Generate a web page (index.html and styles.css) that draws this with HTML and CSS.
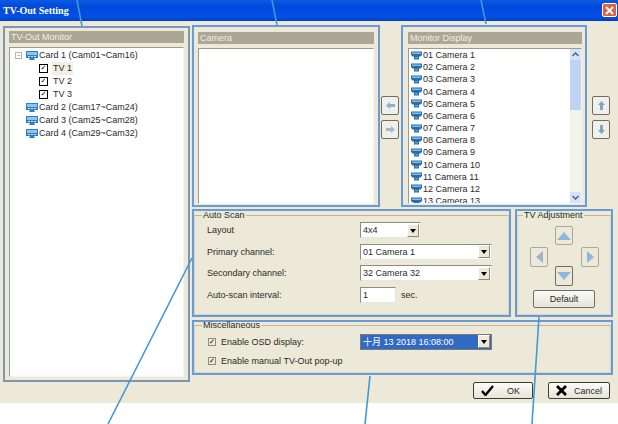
FILE: index.html
```html
<!DOCTYPE html>
<html lang="en">
<head>
<meta charset="utf-8">
<title>TV-Out Setting</title>
<link rel="stylesheet" href="styles.css">
</head>
<body>
<svg class="defs" width="0" height="0" aria-hidden="true">
  <symbol id="card" viewBox="0 0 14 11">
    <path d="M1 1h12v7H9l1 2H4l1-2H1z" fill="#2f7fc8"/>
    <path d="M2 2h10v3H2z" fill="#8cc4ee"/>
    <path d="M3 6h2v1H3zM6 6h2v1H6zM9 6h2v1H9z" fill="#d4e8f8"/>
  </symbol>
  <symbol id="cam" viewBox="0 0 13 11">
    <path d="M1 1.500h11v3.500l-1.500 1.500h-1.500v3h-5v-3h-1.500l-1.500-1.500z" fill="#2a6ea8"/>
    <path d="M2 2.500h9v1.500h-9z" fill="#7fc0ea"/>
    <path d="M5 7h3v1.500h-3z" fill="#5aa2d8"/>
  </symbol>
</svg>
<div class="window">
  <header class="titlebar">
    <span class="title">TV-Out Setting</span>
    <span class="close"><svg width="9" height="9" viewBox="0 0 9 9"><path d="M1 1l7 7M8 1l-7 7" stroke="#fff" stroke-width="2"/></svg></span>
  </header>
  <main class="main">
    <section class="ann left">
      <div class="head">TV-Out Monitor</div>
      <div class="box tree">
        <div class="node"><span class="exp">−</span><svg class="ic"><use href="#card"/></svg>Card 1 (Cam01~Cam16)</div>
        <div class="node sub"><span class="chk">✓</span><span class="sel">TV 1</span></div>
        <div class="node sub"><span class="chk">✓</span>TV 2</div>
        <div class="node sub"><span class="chk">✓</span>TV 3</div>
        <div class="node"><span class="exp none"></span><svg class="ic"><use href="#card"/></svg>Card 2 (Cam17~Cam24)</div>
        <div class="node"><span class="exp none"></span><svg class="ic"><use href="#card"/></svg>Card 3 (Cam25~Cam28)</div>
        <div class="node"><span class="exp none"></span><svg class="ic"><use href="#card"/></svg>Card 4 (Cam29~Cam32)</div>
      </div>
    </section>
    <div class="right">
      <div class="toprow">
        <section class="ann cam">
          <div class="head">Camera</div>
          <div class="box list"></div>
        </section>
        <div class="arrows">
          <button class="arrbtn"><svg width="9" height="9" viewBox="0 0 9 9"><path d="M0 4.500l4-3.500v2h5v3H4v2z" fill="#7fb4dc"/></svg></button>
          <button class="arrbtn"><svg width="9" height="9" viewBox="0 0 9 9"><path d="M9 4.500l-4-3.500v2H0v3h5v2z" fill="#9dbbd2"/></svg></button>
        </div>
        <section class="ann mon">
          <div class="head">Monitor Display</div>
          <div class="box list monlist">
            <div class="rows">
              <div class="row"><svg class="ci"><use href="#cam"/></svg>01 Camera 1</div>
              <div class="row"><svg class="ci"><use href="#cam"/></svg>02 Camera 2</div>
              <div class="row"><svg class="ci"><use href="#cam"/></svg>03 Camera 3</div>
              <div class="row"><svg class="ci"><use href="#cam"/></svg>04 Camera 4</div>
              <div class="row"><svg class="ci"><use href="#cam"/></svg>05 Camera 5</div>
              <div class="row"><svg class="ci"><use href="#cam"/></svg>06 Camera 6</div>
              <div class="row"><svg class="ci"><use href="#cam"/></svg>07 Camera 7</div>
              <div class="row"><svg class="ci"><use href="#cam"/></svg>08 Camera 8</div>
              <div class="row"><svg class="ci"><use href="#cam"/></svg>09 Camera 9</div>
              <div class="row"><svg class="ci"><use href="#cam"/></svg>10 Camera 10</div>
              <div class="row"><svg class="ci"><use href="#cam"/></svg>11 Camera 11</div>
              <div class="row"><svg class="ci"><use href="#cam"/></svg>12 Camera 12</div>
              <div class="row"><svg class="ci"><use href="#cam"/></svg>13 Camera 13</div>
            </div>
            <div class="sbar">
              <span class="sb-btn"><svg width="7" height="5" viewBox="0 0 7 5"><path d="M.5 4l3-3 3 3" fill="none" stroke="#3d5f96" stroke-width="1.400"/></svg></span>
              <span class="sb-thumb"></span>
              <span class="sb-track"></span>
              <span class="sb-btn"><svg width="7" height="5" viewBox="0 0 7 5"><path d="M.5 1l3 3 3-3" fill="none" stroke="#3d5f96" stroke-width="1.400"/></svg></span>
            </div>
          </div>
        </section>
        <div class="arrows side">
          <button class="arrbtn"><svg width="9" height="9" viewBox="0 0 9 9"><path d="M4.500 0l3.500 4H6v5H3V4H1z" fill="#7fa6c8"/></svg></button>
          <button class="arrbtn"><svg width="9" height="9" viewBox="0 0 9 9"><path d="M4.500 9L1 5h2V0h3v5h2z" fill="#7fa6c8"/></svg></button>
        </div>
      </div>
      <div class="midrow">
        <section class="ann auto">
          <fieldset class="group">
            <legend>Auto Scan</legend>
            <div class="form">
              <span class="lbl">Layout</span>
              <div class="combo short"><span class="val">4x4</span><span class="drop"></span></div>
              <span class="lbl">Primary channel:</span>
              <div class="combo"><span class="val">01 Camera 1</span><span class="drop"></span></div>
              <span class="lbl">Secondary channel:</span>
              <div class="combo"><span class="val">32 Camera 32</span><span class="drop"></span></div>
              <span class="lbl">Auto-scan interval:</span>
              <div class="interval"><span class="input">1</span><span>sec.</span></div>
            </div>
          </fieldset>
        </section>
        <section class="ann adj">
          <fieldset class="group">
            <legend>TV Adjustment</legend>
            <div class="pad">
              <button class="pbtn up"><svg width="14" height="8" viewBox="0 0 14 8"><path d="M7 0l7 8H0z" fill="#8db8de"/></svg></button>
              <button class="pbtn lft"><svg width="7" height="12" viewBox="0 0 7 12"><path d="M0 6l7-6v12z" fill="#9fb4c8"/></svg></button>
              <button class="pbtn rgt"><svg width="7" height="12" viewBox="0 0 7 12"><path d="M7 6L0 0v12z" fill="#8db8de"/></svg></button>
              <button class="pbtn dwn"><svg width="14" height="8" viewBox="0 0 14 8"><path d="M7 8L0 0h14z" fill="#8db8de"/></svg></button>
            </div>
            <button class="btn def">Default</button>
          </fieldset>
        </section>
      </div>
      <section class="ann misc">
        <fieldset class="group">
          <legend>Miscellaneous</legend>
          <div class="mrow">
            <label class="ck"><span class="tick">✓</span>Enable OSD display:</label>
            <div class="combo hl"><span class="val">十月 13 2018 16:08:00</span><span class="drop"></span></div>
          </div>
          <div class="mrow">
            <label class="ck"><span class="tick">✓</span>Enable manual TV-Out pop-up</label>
          </div>
        </fieldset>
      </section>
      <footer class="foot">
        <button class="btn act ok"><svg width="13" height="11" viewBox="0 0 13 11"><path d="M1 6l3.500 4L12 1" fill="none" stroke="#000" stroke-width="2.400"/></svg><span>OK</span></button>
        <button class="btn act cancel"><svg width="11" height="11" viewBox="0 0 11 11"><path d="M1 1l9 9M10 1l-9 9" stroke="#000" stroke-width="2.800"/></svg><span>Cancel</span></button>
      </footer>
    </div>
  </main>
</div>
<svg class="lines" width="618" height="424" aria-hidden="true">
  <path d="M77 0L82 26M272 0L277 25M481 0L486 24M192 258L108 424M370 376L365 424M539 317L532 424" stroke="#3f9ad6" stroke-width="1.600" fill="none"/>
</svg>
</body>
</html>
```
FILE: styles.css
```css
* { box-sizing: border-box; }
html, body { margin: 0; padding: 0; background: #fff; }
body {
  position: relative;
  width: 618px;
  height: 424px;
  overflow: hidden;
  font: 9px/12px "Liberation Sans", "Noto Sans CJK TC", sans-serif;
  color: #2a2a2a;
}
.defs { position: absolute; }
.window { width: 618px; height: 403px; background: #ece9d8; }
.titlebar {
  height: 21px;
  display: flex;
  align-items: center;
  justify-content: space-between;
  padding: 0 1px 1px 3px;
  background: linear-gradient(#0a5ce0, #0348dc 30%, #0450e4 80%, #0340c0);
}
.title { font: bold 10px "Liberation Serif", serif; color: #fff; }
.close {
  width: 15px; height: 14px;
  display: flex; align-items: center; justify-content: center;
  background: #e2603a;
  border: 1px solid #fff;
  border-radius: 2px;
}
.main { display: flex; gap: 2px; padding: 4px 0 0 3px; }
.ann { border: 2px solid #6a9bd4; }
.left {
  width: 187px; height: 356px;
  margin-top: 1px;
  padding: 3px 4px;
  display: flex; flex-direction: column;
  border-color: #7d95b8;
}
.right { width: 421px; display: flex; flex-direction: column; }
.head {
  height: 12px;
  flex: none;
  margin-bottom: 4px;
  padding-left: 2px;
  background: #aba696;
  color: #f2efe6;
  font-size: 9px;
  line-height: 12px;
}
.box {
  flex: 1;
  min-height: 0;
  background: #fff;
  border: 1px solid;
  border-color: #9d9a8a #f6f4ec #f6f4ec #9d9a8a;
  overflow: hidden;
}
.tree { padding: 0 0 0 5px; }
.node { height: 13px; line-height: 13px; display: flex; align-items: center; white-space: nowrap; }
.node:first-child { margin-top: 1px; }
.exp {
  width: 7px; height: 7px; flex: none;
  margin-right: 3px;
  border: 1px solid #b8b8a8;
  color: #888;
  font-size: 7px; line-height: 5px;
  text-align: center;
}
.exp.none { border: 0; }
.ic { width: 14px; height: 11px; flex: none; }
.sub { padding-left: 24px; }
.chk {
  width: 9px; height: 9px; flex: none;
  margin-right: 5px;
  border: 1.500px solid #000;
  color: #000;
  font: bold 7px/6px "DejaVu Sans", sans-serif;
  text-align: center;
}
.sel { background: #f3efe2; padding: 0 1px; margin-left: -1px; }
.toprow { display: flex; height: 182px; }
.cam, .mon { height: 182px; padding: 5px 4px 1px; display: flex; flex-direction: column; }
.cam { width: 188px; }
.mon { width: 186px; margin-left: 21px; padding-left: 5px; padding-right: 3px; }
.arrows {
  width: 21px;
  position: absolute;
  left: 381px;
  top: 96px;
  display: flex; flex-direction: column; gap: 5px;
}
.arrows.side { left: 592px; }
.arrbtn {
  width: 18px; height: 19px;
  padding: 0;
  display: flex; align-items: center; justify-content: center;
  background: #f1f0e8;
  border: 1px solid #6f6d64;
  border-radius: 2px;
}
.monlist { display: flex; }
.rows { flex: 1; padding: 0 0 0 1px; overflow: hidden; }
.row { height: 12.180px; line-height: 12px; display: flex; align-items: center; white-space: nowrap; }
.ci { width: 13px; height: 11px; flex: none; }
.sbar { width: 11px; flex: none; display: flex; flex-direction: column; background: #f3f3ee; }
.sb-btn { height: 11px; flex: none; display: flex; align-items: center; justify-content: center; background: #d6e3f7; }
.sb-thumb { height: 50px; flex: none; background: #c0d3f5; }
.sb-track { flex: 1; }
.midrow { display: flex; height: 108px; margin-top: 2px; gap: 4px; }
.auto { width: 319px; }
.adj { width: 98px; }
.group {
  height: 100%;
  margin: 0;
  padding: 0;
  min-width: 0;
  border: 1px solid #d8d4c0;
  border-top-color: #c8b49a;
}
legend { padding: 0 1px; margin-left: 7px; font-size: 9px; line-height: 9px; }
.form {
  display: grid;
  grid-template-columns: 153px 1fr;
  grid-auto-rows: 16px;
  row-gap: 5.500px;
  align-items: center;
  padding: 2px 0 0 12px;
}
.combo {
  width: 132px; height: 16px;
  display: flex;
  align-items: center;
  justify-content: space-between;
  background: #fff;
  border: 1px solid;
  border-color: #8f8c7e #e8e6da #e8e6da #8f8c7e;
  padding: 0 1px 0 2px;
}
.combo.short { width: 61px; }
.drop {
  width: 12px; height: 13px;
  flex: none;
  position: relative;
  background: #ece9d8;
  border: 1px solid #8d8a7c;
  border-top-color: #fff;
  border-left-color: #fff;
}
.drop::after {
  content: "";
  position: absolute;
  left: 2px; top: 4px;
  border: 3px solid transparent;
  border-top: 4px solid #000;
  border-bottom: 0;
}
.interval { display: flex; align-items: center; gap: 5px; }
.input {
  width: 36px; height: 16px;
  padding-left: 2px;
  background: #fff;
  border: 1px solid;
  border-color: #8f8c7e #e8e6da #e8e6da #8f8c7e;
  line-height: 14px;
}
.pad {
  display: grid;
  grid-template-columns: 18px 7px 18px 8px 18px;
  grid-template-rows: 21px 19px 20px;
  width: 69px;
  margin: 6px 0 0 12px;
}
.adj legend { margin-left: 5px; }
.pbtn {
  padding: 0;
  display: flex; align-items: center; justify-content: center;
  background: #ece9d8;
  border: 1px solid #aaa89a;
  border-radius: 2px;
}
.up { grid-column: 3; grid-row: 1; height: 19px; }
.lft { grid-column: 1; grid-row: 2; height: 20px; }
.rgt { grid-column: 5; grid-row: 2; height: 20px; }
.dwn { grid-column: 3; grid-row: 3; border-color: #6f6d64; }
.btn {
  font: 9px "Liberation Sans", sans-serif;
  color: #2a2a2a;
  background: linear-gradient(#fbfbf8, #e6e4d8);
  border: 1px solid #6f6d64;
  border-radius: 2px;
}
.def { display: block; width: 62px; height: 18px; margin: 4px 0 0 15px; padding: 0; }
.misc { height: 55px; margin-top: 3px; }
.misc .group { margin-top: -1px; height: calc(100% + 1px); }
.mrow { display: flex; align-items: center; height: 19px; padding-left: 13px; }
.mrow:first-of-type { margin-top: 2px; }
.ck { width: 152px; display: flex; align-items: center; }
.tick {
  width: 8px; height: 8px;
  margin-right: 5px;
  border: 1px solid #8f8c7e;
  color: #000;
  font: bold 7px/6px "DejaVu Sans", sans-serif;
  text-align: center;
}
.hl { background: #316ac5; color: #fff; border-color: #7d7a6e; }
.foot { display: flex; height: 17px; margin-top: 7px; padding-left: 281px; gap: 15px; }
.act { height: 17px; padding: 0 0 0 7px; display: flex; align-items: center; border-color: #3d3c37; }
.ok { width: 60px; gap: 13px; }
.cancel { width: 62px; gap: 7px; }
.lines { position: absolute; left: 0; top: 0; pointer-events: none; }
```
